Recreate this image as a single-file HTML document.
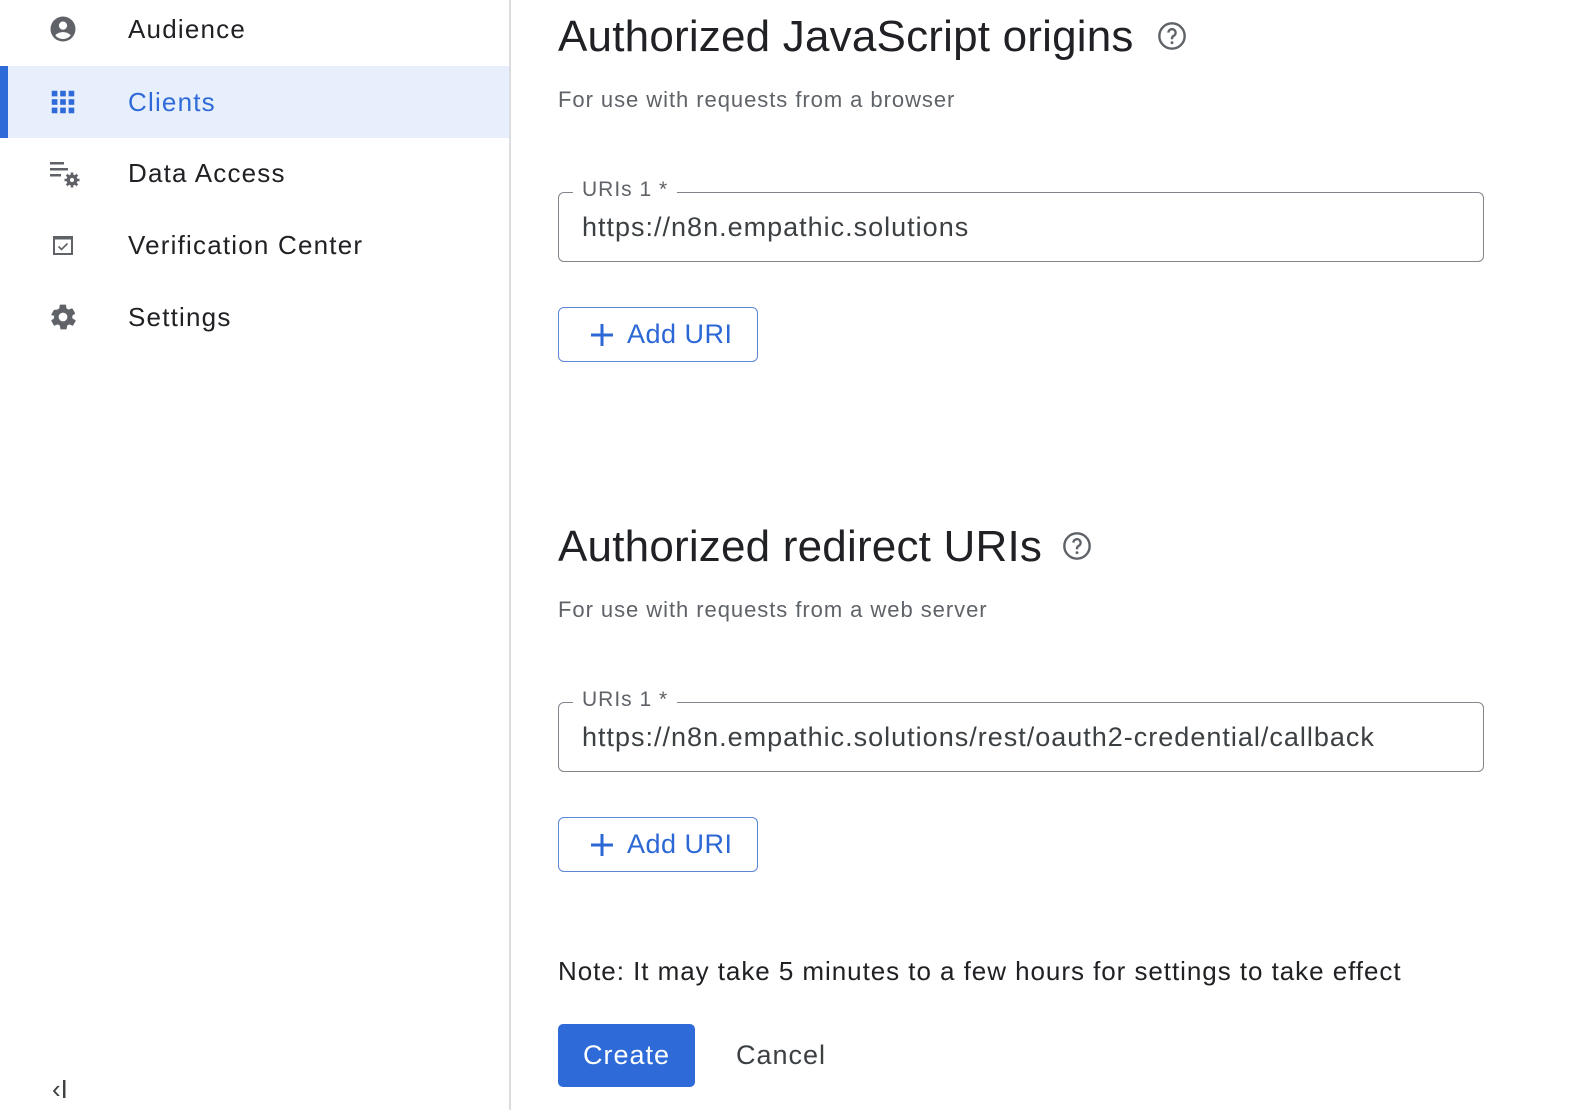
<!DOCTYPE html>
<html><head><style>
body{margin:0;width:1574px;height:1110px;position:relative;background:#fff;font-family:"Liberation Sans",Arial,sans-serif;overflow:hidden;color:#202124}
.a{position:absolute}
.nav{position:absolute;left:0;width:509px;height:72px;display:flex;align-items:center}
.nav span{position:absolute;left:128px;font-size:26px;letter-spacing:1.2px;color:#202124}
.nav svg{position:absolute;left:48px}
.h{font-size:44px;letter-spacing:0.2px;color:#202124;white-space:nowrap}
.sub{font-size:22px;letter-spacing:0.95px;color:#5f6368}
.field{position:absolute;left:558px;width:924px;height:68px;border:1.5px solid #80868b;border-radius:6px}
.field .lbl{position:absolute;left:14px;top:-15px;background:#fff;padding:0 9px;font-size:21px;letter-spacing:1px;color:#5f6368}
.field .val{position:absolute;left:23px;top:19px;font-size:27px;letter-spacing:1px;color:#3c4043;white-space:nowrap}
.btn{position:absolute;left:558px;width:198px;height:53px;border:1.5px solid #5b87d6;border-radius:6px;color:#2c67d6;font-size:27px;letter-spacing:0.5px}
.btn svg{position:absolute;left:30px;top:14px}
.btn span{position:absolute;left:68px;top:11px}
</style></head><body>
<div class="a" style="left:509px;top:0;width:2px;height:1110px;background:#dadce0"></div>

<div class="nav" style="top:-7px"><svg width="30" height="30" viewBox="0 0 24 24"><path fill="#5f6368" d="M12 2a10 10 0 1 0 0 20 10 10 0 0 0 0-20zm0 4a3.3 3.3 0 1 1 0 6.6A3.3 3.3 0 0 1 12 6zm0 14a8 8 0 0 1-6.2-3c1.6-1.7 4-2.5 6.2-2.5s4.6.8 6.2 2.5A8 8 0 0 1 12 20z"/></svg><span>Audience</span></div>
<div class="nav" style="top:66px;background:#e8effc"><div class="a" style="left:0;top:0;width:8px;height:72px;background:#2e6bd9"></div><svg width="30" height="30" viewBox="0 0 24 24" style="left:48px"><g fill="#2e6bd9"><rect x="3" y="3" width="4.5" height="4.5"/><rect x="9.75" y="3" width="4.5" height="4.5"/><rect x="16.5" y="3" width="4.5" height="4.5"/><rect x="3" y="9.75" width="4.5" height="4.5"/><rect x="9.75" y="9.75" width="4.5" height="4.5"/><rect x="16.5" y="9.75" width="4.5" height="4.5"/><rect x="3" y="16.5" width="4.5" height="4.5"/><rect x="9.75" y="16.5" width="4.5" height="4.5"/><rect x="16.5" y="16.5" width="4.5" height="4.5"/></g></svg><span style="color:#2e6bd9">Clients</span></div>
<div class="nav" style="top:137px"><svg width="34" height="30" viewBox="0 0 34 30"><g fill="#5f6368"><rect x="2" y="4" width="14" height="2.5"/><rect x="2" y="10" width="18" height="2.5"/><rect x="2" y="16" width="11" height="2.5"/><circle cx="24" cy="22" r="5.5"/></g><circle cx="24" cy="22" r="2" fill="#fff"/><path d="M24 14.5v3M24 26.5v3M16.5 22h3M28.5 22h3M18.7 16.7l2.1 2.1M27.2 25.2l2.1 2.1M18.7 27.3l2.1-2.1M27.2 18.8l2.1-2.1" stroke="#5f6368" stroke-width="2.6"/></svg><span>Data Access</span></div>
<div class="nav" style="top:209px"><svg width="30" height="30" viewBox="0 0 30 30"><rect x="6" y="7" width="18" height="17" fill="none" stroke="#5f6368" stroke-width="2"/><rect x="6" y="7" width="18" height="2.5" fill="#5f6368"/><path d="M10.5 16.5l3 3 6-6" fill="none" stroke="#5f6368" stroke-width="1.6"/></svg><span>Verification Center</span></div>
<div class="nav" style="top:281px"><svg width="30" height="30" viewBox="0 0 24 24"><path fill="#5f6368" d="M19.4 13c.1-.3.1-.7.1-1s0-.7-.1-1l2.1-1.6c.2-.2.2-.4.1-.6l-2-3.5c-.1-.2-.4-.3-.6-.2l-2.5 1c-.5-.4-1.1-.7-1.7-1l-.4-2.6c0-.3-.2-.4-.5-.4h-4c-.2 0-.5.2-.5.4l-.4 2.7c-.6.2-1.1.6-1.700 1L5.3 6.2c-.2-.1-.5 0-.6.2l-2 3.5c-.1.2-.1.5.1.6L4.9 11c0 .3-.1.7-.1 1s0 .7.1 1l-2.1 1.6c-.2.2-.2.4-.1.6l2 3.5c.1.2.4.3.6.2l2.5-1c.5.4 1.1.7 1.7 1l.4 2.6c0 .3.2.4.5.4h4c.2 0 .5-.2.5-.4l.4-2.6c.6-.3 1.2-.6 1.7-1l2.5 1c.2.1.5 0 .6-.2l2-3.5c.1-.2.1-.5-.1-.6L19.4 13zM12 15.5a3.5 3.5 0 1 1 0-7 3.5 3.5 0 0 1 0 7z"/></svg><span>Settings</span></div>
<div class="a" style="left:52px;top:1074px;font-size:26px;color:#3c4043">&lsaquo;I</div>

<div class="a h" style="left:558px;top:12px">Authorized JavaScript origins</div>
<svg class="a" style="left:1156px;top:20px" width="32" height="32" viewBox="0 0 24 24"><circle cx="12" cy="12" r="9.5" fill="none" stroke="#5f6368" stroke-width="1.8"/><path d="M9.3 9.5a2.7 2.7 0 1 1 3.8 2.5c-.7.4-1.1.9-1.1 1.8v.6" fill="none" stroke="#5f6368" stroke-width="1.8"/><circle cx="12" cy="17" r="1.1" fill="#5f6368"/></svg>
<div class="a sub" style="left:558px;top:87px">For use with requests from a browser</div>
<div class="field" style="top:192px"><div class="lbl">URIs 1 *</div><div class="val">https://n8n.empathic.solutions</div></div>
<div class="btn" style="top:307px"><svg width="26" height="26" viewBox="0 0 26 26"><path d="M13 2v22M2 13h22" stroke="#2c67d6" stroke-width="3"/></svg><span>Add URI</span></div>

<div class="a h" style="left:558px;top:522px">Authorized redirect URIs</div>
<svg class="a" style="left:1061px;top:530px" width="32" height="32" viewBox="0 0 24 24"><circle cx="12" cy="12" r="9.5" fill="none" stroke="#5f6368" stroke-width="1.8"/><path d="M9.3 9.5a2.7 2.7 0 1 1 3.8 2.5c-.7.4-1.1.9-1.1 1.8v.6" fill="none" stroke="#5f6368" stroke-width="1.8"/><circle cx="12" cy="17" r="1.1" fill="#5f6368"/></svg>
<div class="a sub" style="left:558px;top:597px">For use with requests from a web server</div>
<div class="field" style="top:702px"><div class="lbl">URIs 1 *</div><div class="val">https://n8n.empathic.solutions/rest/oauth2-credential/callback</div></div>
<div class="btn" style="top:817px"><svg width="26" height="26" viewBox="0 0 26 26"><path d="M13 2v22M2 13h22" stroke="#2c67d6" stroke-width="3"/></svg><span>Add URI</span></div>

<div class="a" style="left:558px;top:956px;font-size:26px;letter-spacing:0.95px;color:#202124;white-space:nowrap">Note: It may take 5 minutes to a few hours for settings to take effect</div>
<div class="a" style="left:558px;top:1024px;width:137px;height:63px;background:#2e6bd9;border-radius:5px;color:#fff;font-size:27px;letter-spacing:1px;text-align:center;line-height:63px">Create</div>
<div class="a" style="left:736px;top:1040px;font-size:27px;letter-spacing:1px;color:#3c4043">Cancel</div>
</body></html>
